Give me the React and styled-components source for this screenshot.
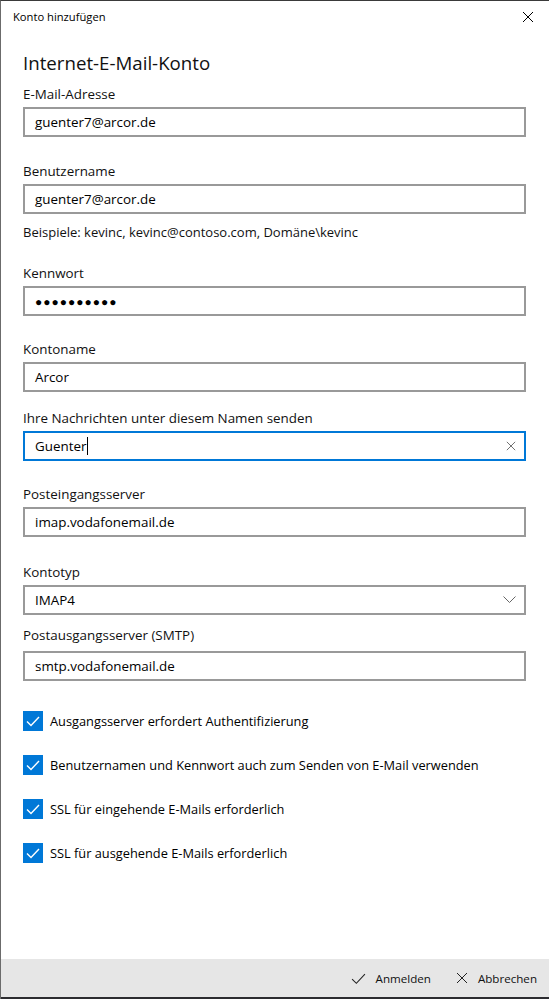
import React from 'react';
import styled, { createGlobalStyle } from 'styled-components';

const GlobalStyle = createGlobalStyle`
  html, body {
    margin: 0;
    padding: 0;
    background: #fff;
  }
  body {
    font-family: 'Open Sans', 'Noto Sans', sans-serif;
    color: #000;
  }
  * {
    box-sizing: border-box;
  }
`;

const Window = styled.div`
  height: 999px;
  display: flex;
  flex-direction: column;
  background: #fff;
  border-top: 1px solid #3a3a3a;
  border-left: 1px solid #6b6b6b;
`;

const TitleBar = styled.div`
  height: 31px;
  display: flex;
  align-items: center;
  justify-content: space-between;
  padding: 0 15px 0 12px;
  font-size: 11.2px;
`;

const IconButton = styled.span`
  display: flex;
  align-items: center;
  justify-content: center;
`;

const Content = styled.div`
  flex: 1;
  padding: 17px 23px 0 22px;
`;

const Heading = styled.h1`
  margin: 0;
  font-size: 18.7px;
  font-weight: 400;
  line-height: 28px;
  color: #111;
`;

const Field = styled.div`
  margin-top: ${props => props.$top || 0}px;
`;

const Label = styled.div`
  font-size: 13.4px;
  line-height: 20px;
  margin-bottom: ${props => props.$gap || 3}px;
  color: #111;
`;

const Hint = styled.div`
  font-size: 13px;
  line-height: 20px;
  margin-top: 8px;
  color: #111;
`;

const InputBox = styled.div`
  height: 30px;
  border: 2px solid ${props => (props.$focused ? '#0078d7' : '#999')};
  display: flex;
  align-items: center;
  justify-content: space-between;
  padding: 0 8px 0 10px;
  font-size: 13.4px;
  background: #fff;
`;

const Value = styled.span`
  display: flex;
  align-items: center;
`;

const Dots = styled.span`
  font-size: 12px;
  letter-spacing: 1px;
`;

const Caret = styled.span`
  display: inline-block;
  width: 1px;
  height: 18px;
  background: #000;
  margin-left: 1px;
`;

const CheckList = styled.div`
  margin-top: 30px;
  display: flex;
  flex-direction: column;
  gap: 24px;
`;

const CheckRow = styled.div`
  display: flex;
  align-items: center;
  gap: 7px;
  font-size: 12.8px;
  line-height: 20px;
`;

const Box = styled.span`
  width: 20px;
  height: 20px;
  background: #0078d7;
  display: flex;
  align-items: center;
  justify-content: center;
  flex-shrink: 0;
`;

const Footer = styled.div`
  height: 38px;
  background: #e6e6e6;
  display: flex;
  align-items: center;
  justify-content: flex-end;
  gap: 25px;
  padding-right: 12px;
`;

const FooterButton = styled.div`
  display: flex;
  align-items: center;
  gap: 10px;
  font-size: 11.6px;
  color: #111;
`;

const Desktop = styled.div`
  height: 2px;
  background: #2c2c30;
`;

const Cross = ({ size = 12, color = '#000' }) => (
  <svg width={size} height={size} viewBox="0 0 12 12">
    <path d="M1 1 L11 11 M11 1 L1 11" stroke={color} strokeWidth="1" fill="none" />
  </svg>
);

const Tick = ({ size = 14, color = '#000', width = 1 }) => (
  <svg width={size} height={size} viewBox="0 0 14 14">
    <path d="M1 7.5 L5 11.5 L13 3" stroke={color} strokeWidth={width} fill="none" />
  </svg>
);

const Chevron = () => (
  <svg width="13" height="8" viewBox="0 0 13 8">
    <path d="M0.5 0.5 L6.5 6.5 L12.5 0.5" stroke="#666" strokeWidth="1" fill="none" />
  </svg>
);

const fields = [
  { label: 'E-Mail-Adresse', value: 'guenter7@arcor.de', top: 7 },
  { label: 'Benutzername', value: 'guenter7@arcor.de', top: 24, hint: 'Beispiele: kevinc, kevinc@contoso.com, Domäne\\kevinc' },
  { label: 'Kennwort', password: true, top: 21 },
  { label: 'Kontoname', value: 'Arcor', top: 23 },
  { label: 'Ihre Nachrichten unter diesem Namen senden', value: 'Guenter', top: 16, focused: true },
  { label: 'Posteingangsserver', value: 'imap.vodafonemail.de', top: 23 },
  { label: 'Kontotyp', value: 'IMAP4', top: 25, select: true },
  { label: 'Postausgangsserver (SMTP)', value: 'smtp.vodafonemail.de', top: 10, gap: 6 },
];

const options = [
  'Ausgangsserver erfordert Authentifizierung',
  'Benutzernamen und Kennwort auch zum Senden von E-Mail verwenden',
  'SSL für eingehende E-Mails erforderlich',
  'SSL für ausgehende E-Mails erforderlich',
];

const App = () => {
  return (
    <>
      <GlobalStyle />
      <Window>
        <TitleBar>
          <span>Konto hinzufügen</span>
          <IconButton>
            <Cross size={12} />
          </IconButton>
        </TitleBar>

        <Content>
          <Heading>Internet-E-Mail-Konto</Heading>

          {fields.map(f => (
            <Field key={f.label} $top={f.top}>
              <Label $gap={f.gap}>{f.label}</Label>
              <InputBox $focused={f.focused}>
                <Value>
                  {f.password ? <Dots>●●●●●●●●●●</Dots> : f.value}
                  {f.focused && <Caret />}
                </Value>
                {f.focused && (
                  <IconButton>
                    <Cross size={10} color="#555" />
                  </IconButton>
                )}
                {f.select && (
                  <IconButton>
                    <Chevron />
                  </IconButton>
                )}
              </InputBox>
              {f.hint && <Hint>{f.hint}</Hint>}
            </Field>
          ))}

          <CheckList>
            {options.map(text => (
              <CheckRow key={text}>
                <Box>
                  <Tick size={14} color="#fff" width={1.4} />
                </Box>
                {text}
              </CheckRow>
            ))}
          </CheckList>
        </Content>

        <Footer>
          <FooterButton>
            <Tick size={15} color="#222" />
            Anmelden
          </FooterButton>
          <FooterButton>
            <Cross size={12} color="#222" />
            Abbrechen
          </FooterButton>
        </Footer>
        <Desktop />
      </Window>
    </>
  );
};

export default App;
